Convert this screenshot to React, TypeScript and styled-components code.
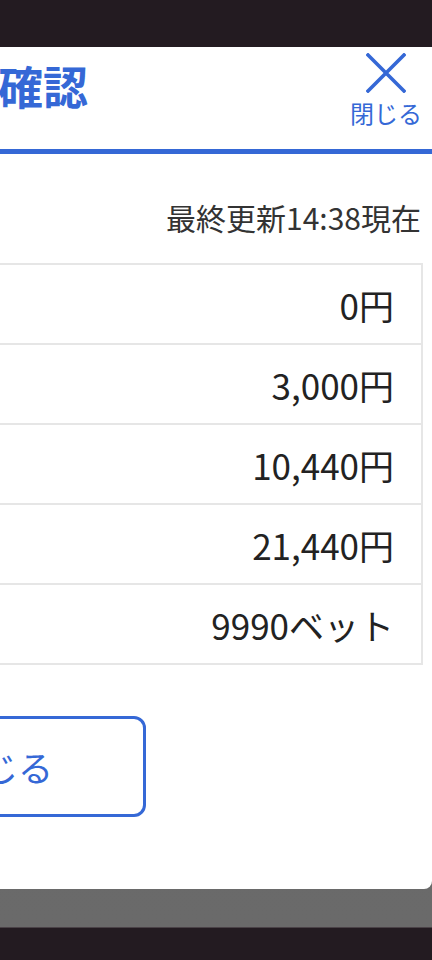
import React from "react"
import styled, { createGlobalStyle } from "styled-components"

const GlobalStyle = createGlobalStyle`
  html, body {
    margin: 0;
    padding: 0;
    background: #231b21;
    overflow: hidden;
    font-family: "Noto Sans CJK JP", "Noto Sans", sans-serif;
  }
`

const Page = styled.div`
  width: 432px;
  height: 960px;
  display: flex;
  flex-direction: column;
  overflow: hidden;
`

const TopBar = styled.div`
  height: 47px;
  flex-shrink: 0;
  background: #231b21;
`

const Overlay = styled.div`
  height: 880px;
  flex-shrink: 0;
  background: linear-gradient(to bottom, #666666, #6a6a6a);
  display: flex;
  justify-content: flex-end;
  align-items: flex-start;
  overflow: hidden;
`

const BottomBar = styled.div`
  flex: 1;
  background: #231b21;
  border-top: 1px solid #4a4247;
`

const Modal = styled.div`
  flex-shrink: 0;
  width: 864px;
  height: 842px;
  background: #ffffff;
  border-radius: 0 0 8px 8px;
  display: flex;
  flex-direction: column;
`

const Header = styled.header`
  display: grid;
  grid-template-columns: 1fr auto 1fr;
  align-items: start;
  height: 107px;
  padding: 0 10px;
  border-bottom: 5px solid #3568d6;
  box-sizing: border-box;
`

const Title = styled.h1`
  grid-column: 2;
  margin: 16px 4px 0 0;
  font-size: 45px;
  font-weight: 700;
  color: #3568d6;
  line-height: 1;
`

const CloseButton = styled.button`
  grid-column: 3;
  justify-self: end;
  display: flex;
  flex-direction: column;
  align-items: center;
  gap: 6px;
  margin-top: 6px;
  padding: 0;
  border: none;
  background: none;
  color: #3568d6;
  font-family: inherit;
  font-size: 24px;
  line-height: 1.2;
  cursor: pointer;
`

const Body = styled.div`
  padding: 0 9px 0 10px;
  display: flex;
  flex-direction: column;
`

const Updated = styled.p`
  margin: 42px 2px 25px 0;
  text-align: right;
  font-size: 30px;
  line-height: 42px;
  color: #333333;
`

const Table = styled.div`
  border: 2px solid #e6e6e6;
`

const Row = styled.div`
  display: grid;
  grid-template-columns: 40% 60%;
  height: 78px;

  & + & {
    border-top: 2px solid #e6e6e6;
  }
`

const Label = styled.div`
  display: flex;
  align-items: center;
  padding-left: 24px;
  background: #f6f6f6;
  border-right: 2px solid #e6e6e6;
  font-size: 30px;
  color: #222222;
`

const Value = styled.div`
  display: flex;
  align-items: center;
  justify-content: flex-end;
  padding-right: 27px;
  font-size: 35px;
  color: #222222;
`

const Footer = styled.div`
  display: flex;
  justify-content: center;
  margin-top: 51px;
`

const OutlineButton = styled.button`
  width: 290px;
  height: 101px;
  border: 3px solid #3568d6;
  border-radius: 12px;
  background: #ffffff;
  color: #3568d6;
  font-family: inherit;
  font-size: 35px;
  cursor: pointer;
`

const rows = [
  { label: "購入限度額", value: "0円" },
  { label: "購入予定額", value: "3,000円" },
  { label: "残高", value: "10,440円" },
  { label: "合計", value: "21,440円" },
  { label: "ベット数", value: "9990ベット" },
]

const CloseIcon = () => (
  <svg width="40" height="40" viewBox="0 0 40 40">
    <path d="M2 2 L38 38 M38 2 L2 38" stroke="currentColor" strokeWidth="3.6" strokeLinecap="square" fill="none" />
  </svg>
)

export default function App() {
  return (
    <Page>
      <GlobalStyle />
      <TopBar />
      <Overlay>
        <Modal>
          <Header>
            <Title>残高確認</Title>
            <CloseButton>
              <CloseIcon />
              閉じる
            </CloseButton>
          </Header>
          <Body>
            <Updated>最終更新14:38現在</Updated>
            <Table>
              {rows.map((row) => (
                <Row key={row.label}>
                  <Label>{row.label}</Label>
                  <Value>{row.value}</Value>
                </Row>
              ))}
            </Table>
            <Footer>
              <OutlineButton>閉じる</OutlineButton>
            </Footer>
          </Body>
        </Modal>
      </Overlay>
      <BottomBar />
    </Page>
  )
}
